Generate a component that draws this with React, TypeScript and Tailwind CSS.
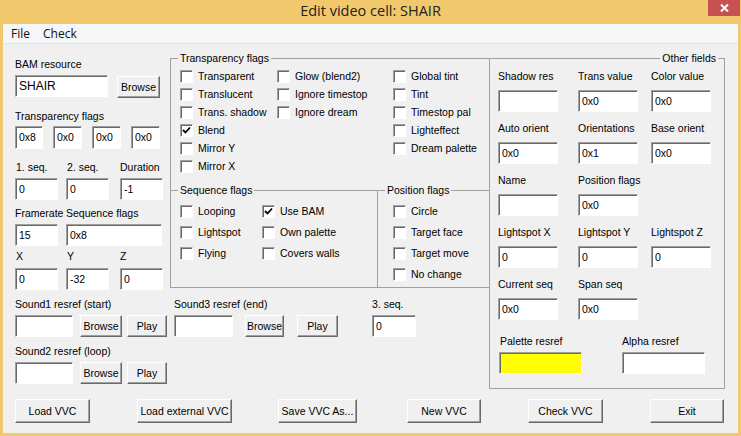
import React from "react";

function Field({ className = "", value = "", yellow = false }: { className?: string; value?: string; yellow?: boolean }) {
  return (
    <div
      className={
        (yellow ? "bg-[#ffff00] " : "bg-white ") +
        "flex items-center pl-[3px] leading-none border border-t-[#a0a0a0] border-l-[#a0a0a0] border-b-white border-r-white shadow-[inset_1px_1px_0_#696969] " +
        className
      }
    >
      {value}
    </div>
  );
}

function Btn({ className = "", children }: { className?: string; children: React.ReactNode }) {
  return (
    <div
      className={
        "flex items-center justify-center bg-[#f0f0f0] leading-none border border-t-white border-l-white border-b-[#696969] border-r-[#696969] shadow-[inset_-1px_-1px_0_#a0a0a0] " +
        className
      }
    >
      {children}
    </div>
  );
}

function Check({ label, checked = false, className = "h-[18px]" }: { label: string; checked?: boolean; className?: string }) {
  return (
    <div className={"flex items-center gap-[5px] " + className}>
      <div className="w-[13px] h-[13px] bg-white border border-t-[#a0a0a0] border-l-[#a0a0a0] border-b-white border-r-white shadow-[inset_1px_1px_0_#696969] flex items-center justify-center">
        {checked && (
          <svg width="9" height="9" viewBox="0 0 9 9">
            <path d="M1 4 L3.5 6.5 L8 1.5" fill="none" stroke="#000" strokeWidth="1.8" />
          </svg>
        )}
      </div>
      <span className="leading-none">{label}</span>
    </div>
  );
}

function Label({ children, className = "" }: { children: React.ReactNode; className?: string }) {
  return <div className={"h-[12px] leading-[12px] whitespace-nowrap " + className}>{children}</div>;
}

function Legend({ children, className = "" }: { children: React.ReactNode; className?: string }) {
  return (
    <span className={"absolute top-[-7px] px-[2px] bg-[#f0f0f0] h-[12px] leading-[12px] whitespace-nowrap " + className}>
      {children}
    </span>
  );
}

export default function App() {
  return (
    <div className="w-[741px] h-[436px] bg-[#f1c96c] overflow-hidden flex flex-col">
      {/* title bar */}
      <div className="h-[24px] relative flex items-center justify-center">
        <span className="font-['Open_Sans',sans-serif] text-[14.5px] text-[#222] leading-none mt-[-1px]">
          Edit video cell: SHAIR
        </span>
        <div className="absolute right-[1px] top-0 w-[32px] h-[16px] bg-[#c75050] flex items-center justify-center">
          <svg width="9" height="8" viewBox="0 0 9 8">
            <path d="M1 0.5 L8 7.5 M8 0.5 L1 7.5" stroke="#fff" strokeWidth="2" />
          </svg>
        </div>
      </div>

      {/* client */}
      <div className="mx-[3px] h-[409px] bg-[#f0f0f0] flex flex-col font-['Liberation_Sans',Arial,sans-serif] text-[10.5px] text-black">
        {/* menu */}
        <div className="h-[20px] bg-[#f5f6f7] border-b border-[#e3e3e3] flex items-center pl-[8px] gap-[13px] font-['Open_Sans',sans-serif] text-[12px] text-[#111]">
          <span>File</span>
          <span>Check</span>
        </div>

        <div className="pl-[12px] pt-[14px] flex flex-col">
          <div className="flex items-start">
            {/* left part */}
            <div className="w-[474px] flex flex-col">
              <div className="flex items-start">
                {/* left column */}
                <div className="w-[155px] flex flex-col">
                  <Label>BAM resource</Label>
                  <div className="flex items-start mt-[5px]">
                    <Field className="w-[93px] h-[22px] text-[12px]" value="SHAIR" />
                    <Btn className="ml-[9px] mt-[1px] w-[43px] h-[22px]">Browse</Btn>
                  </div>
                  <Label className="mt-[12px]">Transparency flags</Label>
                  <div className="flex mt-[4px]">
                    <Field className="w-[28px] h-[23px]" value="0x8" />
                    <Field className="ml-[10px] w-[29px] h-[23px]" value="0x0" />
                    <Field className="ml-[10px] w-[29px] h-[23px]" value="0x0" />
                    <Field className="ml-[10px] w-[29px] h-[23px]" value="0x0" />
                  </div>
                  <div className="grid grid-cols-[51px_54px_50px] mt-[12px]">
                    <Label className="pl-[1px]">1. seq.</Label>
                    <Label className="pl-[1px]">2. seq.</Label>
                    <Label>Duration</Label>
                  </div>
                  <div className="grid grid-cols-[51px_54px_50px] mt-[5px]">
                    <Field className="w-[43px] h-[22px]" value="0" />
                    <Field className="w-[43px] h-[22px]" value="0" />
                    <Field className="w-[43px] h-[22px]" value="-1" />
                  </div>
                  <div className="grid grid-cols-[51px_104px] mt-[7px]">
                    <Label>Framerate</Label>
                    <Label>Sequence flags</Label>
                  </div>
                  <div className="grid grid-cols-[51px_104px] mt-[5px]">
                    <Field className="w-[43px] h-[22px]" value="15" />
                    <Field className="w-[96px] h-[22px]" value="0x8" />
                  </div>
                  <div className="grid grid-cols-[51px_54px_50px] mt-[4px]">
                    <Label className="pl-[1px]">X</Label>
                    <Label className="pl-[1px]">Y</Label>
                    <Label>Z</Label>
                  </div>
                  <div className="grid grid-cols-[51px_54px_50px] mt-[6px]">
                    <Field className="w-[43px] h-[22px]" value="0" />
                    <Field className="w-[43px] h-[22px]" value="-32" />
                    <Field className="w-[43px] h-[22px]" value="0" />
                  </div>
                </div>

                {/* transparency flags group */}
                <div className="relative w-[319px] h-[230px] border-t border-l border-b border-[#a0a0a0] flex flex-col">
                  <Legend className="left-[7px]">Transparency flags</Legend>
                  <div className="h-[131px] flex pt-[8px] pl-[9px]">
                    <div className="w-[97px] flex flex-col">
                      <Check label="Transparent" />
                      <Check label="Translucent" />
                      <Check label="Trans. shadow" />
                      <Check label="Blend" checked />
                      <Check label="Mirror Y" />
                      <Check label="Mirror X" />
                    </div>
                    <div className="w-[116px] flex flex-col">
                      <Check label="Glow (blend2)" />
                      <Check label="Ignore timestop" />
                      <Check label="Ignore dream" />
                    </div>
                    <div className="flex flex-col">
                      <Check label="Global tint" />
                      <Check label="Tint" />
                      <Check label="Timestop pal" />
                      <Check label="Lighteffect" />
                      <Check label="Dream palette" />
                    </div>
                  </div>
                  <div className="flex-1 flex border-t border-[#a0a0a0]">
                    <div className="relative w-[207px] border-r border-[#a0a0a0] flex pt-[10px] pl-[9px]">
                      <Legend className="left-[7px]">Sequence flags</Legend>
                      <div className="w-[82px] flex flex-col">
                        <Check label="Looping" className="h-[21px]" />
                        <Check label="Lightspot" className="h-[21px]" />
                        <Check label="Flying" className="h-[21px]" />
                      </div>
                      <div className="flex flex-col">
                        <Check label="Use BAM" checked className="h-[21px]" />
                        <Check label="Own palette" className="h-[21px]" />
                        <Check label="Covers walls" className="h-[21px]" />
                      </div>
                    </div>
                    <div className="relative flex-1 flex flex-col pt-[10px] pl-[15px]">
                      <Legend className="left-[7px]">Position flags</Legend>
                      <Check label="Circle" className="h-[21px]" />
                      <Check label="Target face" className="h-[21px]" />
                      <Check label="Target move" className="h-[21px]" />
                      <Check label="No change" className="h-[21px]" />
                    </div>
                  </div>
                </div>
              </div>

              {/* sound rows */}
              <div className="flex items-start mt-[8px]">
                <div className="flex flex-col">
                  <Label>Sound1 resref (start)</Label>
                  <div className="flex mt-[5px]">
                    <Field className="w-[58px] h-[22px]" />
                    <Btn className="ml-[7px] w-[42px] h-[22px]">Browse</Btn>
                    <Btn className="ml-[5px] w-[40px] h-[22px]">Play</Btn>
                  </div>
                </div>
                <div className="flex flex-col ml-[7px]">
                  <Label>Sound3 resref (end)</Label>
                  <div className="flex mt-[5px]">
                    <Field className="w-[59px] h-[22px]" />
                    <Btn className="ml-[12px] w-[39px] h-[22px]">Browse</Btn>
                    <Btn className="ml-[13px] w-[41px] h-[22px]">Play</Btn>
                  </div>
                </div>
                <div className="flex flex-col ml-[34px]">
                  <Label>3. seq.</Label>
                  <Field className="mt-[5px] w-[44px] h-[22px]" value="0" />
                </div>
              </div>
              <Label className="mt-[8px]">Sound2 resref (loop)</Label>
              <div className="flex mt-[5px]">
                <Field className="w-[58px] h-[22px]" />
                <Btn className="ml-[7px] w-[42px] h-[22px]">Browse</Btn>
                <Btn className="ml-[5px] w-[40px] h-[22px]">Play</Btn>
              </div>
            </div>

            {/* other fields group */}
            <div className="relative w-[236px] h-[331px] border border-[#a0a0a0] flex flex-col pt-[11px] pl-[8px]">
              <Legend className="right-[6px]">Other fields</Legend>
              <div className="grid grid-cols-[80px_73px_60px] gap-y-[10px]">
                {[
                  ["Shadow res", "", "Trans value", "0x0", "Color value", "0x0"],
                  ["Auto orient", "0x0", "Orientations", "0x1", "Base orient", "0x0"],
                  ["Name", "", "Position flags", "0x0", null, null],
                  ["Lightspot X", "0", "Lightspot Y", "0", "Lightspot Z", "0"],
                  ["Current seq", "0x0", "Span seq", "0x0", null, null],
                ].map((row, i) => (
                  <React.Fragment key={i}>
                    {[0, 2, 4].map((j) =>
                      row[j] === null ? (
                        <div key={j} />
                      ) : (
                        <div key={j} className="flex flex-col">
                          <Label>{row[j]}</Label>
                          <Field className="mt-[8px] w-[60px] h-[22px]" value={row[j + 1] as string} />
                        </div>
                      )
                    )}
                  </React.Fragment>
                ))}
              </div>
              <div className="flex mt-[15px]">
                <div className="flex flex-col w-[124px] pl-[1px]">
                  <Label className="pl-[1px]">Palette resref</Label>
                  <Field yellow className="mt-[5px] w-[83px] h-[22px]" />
                </div>
                <div className="flex flex-col">
                  <Label>Alpha resref</Label>
                  <Field className="mt-[5px] w-[83px] h-[22px]" />
                </div>
              </div>
            </div>
          </div>

          {/* bottom buttons */}
          <div className="flex mt-[10px]">
            <Btn className="w-[75px] h-[24px]">Load VVC</Btn>
            <Btn className="ml-[47px] w-[95px] h-[24px]">Load external VVC</Btn>
            <Btn className="ml-[46px] w-[79px] h-[24px]">Save VVC As...</Btn>
            <Btn className="ml-[50px] w-[74px] h-[24px]">New VVC</Btn>
            <Btn className="ml-[47px] w-[75px] h-[24px]">Check VVC</Btn>
            <Btn className="ml-[47px] w-[74px] h-[24px]">Exit</Btn>
          </div>
        </div>
      </div>
    </div>
  );
}
